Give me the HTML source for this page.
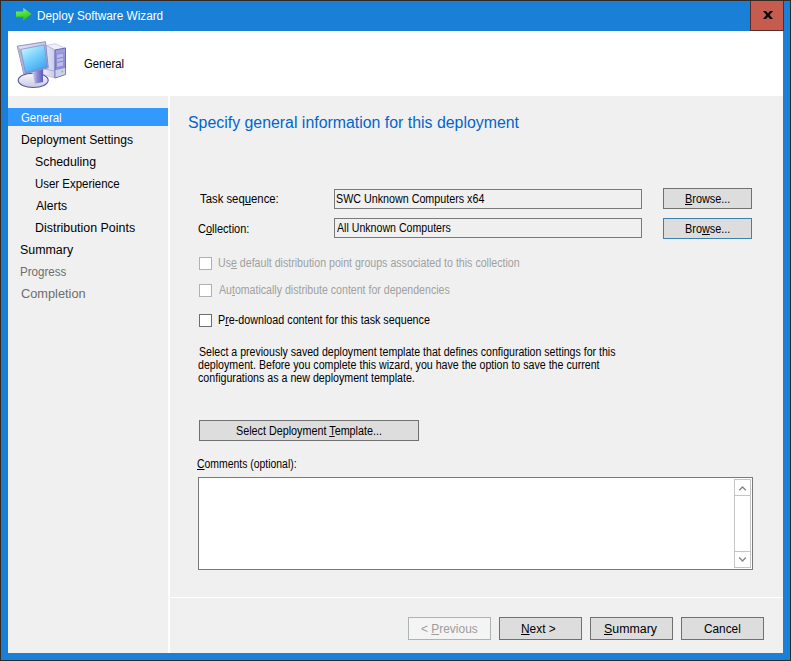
<!DOCTYPE html>
<html><head><meta charset="utf-8">
<style>
*{margin:0;padding:0;box-sizing:border-box}
html,body{width:791px;height:661px;overflow:hidden;background:#342a22}
body{position:relative;font-family:"Liberation Sans",sans-serif;color:#000}
.a{position:absolute}
.t{position:absolute;white-space:nowrap;line-height:1;transform-origin:0 0}
.u{text-decoration:underline}
.btn{position:absolute;background:#dddddd;border:1px solid #707070}
.tb{position:absolute;background:#f0f0f0;border:1px solid #7a7a7a}

.cb{position:absolute;width:13px;height:13px;background:#fff;border:1px solid #6d6d6d}
.cb.dis{border-color:#adb2b5}
</style></head><body>
<div class="a" style="left:1px;top:1px;width:789px;height:659px;background:#1a7fd6"></div>
<svg class="a" style="left:0;top:0" width="40" height="30" viewBox="0 0 40 30">
<defs>
<linearGradient id="ga" x1="0" y1="0" x2="0.3" y2="1"><stop offset="0" stop-color="#8cf27a"/><stop offset="0.5" stop-color="#55e043"/><stop offset="1" stop-color="#2fb82a"/></linearGradient>
</defs>
<path d="M16 11.5 H23.2 V7.8 L31.8 14.3 L23.2 21 V17.2 H16 Z" fill="url(#ga)"/>
<path d="M16.3 17 H23.3 M23.6 20.4 L31.2 14.6" stroke="#23a323" stroke-width="0.8" fill="none" opacity="0.8"/>
</svg>
<div class="a" style="left:750px;top:1px;width:34px;height:30px;background:#c65b50;border:1px solid #5a2c26;border-top:none"></div>
<svg class="a" style="left:759.5px;top:8px" width="16" height="14" viewBox="0 0 16 14">
<path d="M3 3 H6.2 L8 5.4 L9.8 3 H13 L9.6 7 L13 11 H9.8 L8 8.6 L6.2 11 H3 L6.4 7 Z" fill="#000"/>
</svg>

<div class="a" style="left:8px;top:31px;width:775px;height:622px;background:#f0f0f0"></div>
<div class="a" style="left:8px;top:31px;width:775px;height:65px;background:#fff"></div>
<div class="a" style="left:168px;top:96px;width:2px;height:557px;background:#fff"></div>
<div class="a" style="left:170px;top:597px;width:613px;height:1px;background:#fff"></div>

<svg class="a" style="left:0;top:31px" width="80" height="65" viewBox="0 31 80 65">
<defs>
<linearGradient id="scr" x1="0.2" y1="0" x2="0.8" y2="1"><stop offset="0" stop-color="#c8f6ff"/><stop offset="0.45" stop-color="#78d0fc"/><stop offset="1" stop-color="#36a0f2"/></linearGradient>
<linearGradient id="frm" x1="0" y1="0" x2="1" y2="1"><stop offset="0" stop-color="#e8e8f4"/><stop offset="1" stop-color="#a4a4d4"/></linearGradient>
<linearGradient id="base" x1="0" y1="0" x2="0" y2="1"><stop offset="0" stop-color="#fafafe"/><stop offset="1" stop-color="#c8c8e0"/></linearGradient>
<linearGradient id="tw" x1="0" y1="0" x2="1" y2="0"><stop offset="0" stop-color="#eeeef8"/><stop offset="1" stop-color="#cacae8"/></linearGradient>
<linearGradient id="tf" x1="0" y1="0" x2="0" y2="1"><stop offset="0" stop-color="#a0a0e2"/><stop offset="1" stop-color="#8484cc"/></linearGradient>
<linearGradient id="neck" x1="0" y1="0" x2="1" y2="0"><stop offset="0" stop-color="#dcdcf4"/><stop offset="0.45" stop-color="#9090d6"/><stop offset="1" stop-color="#5a5abc"/></linearGradient>
</defs>
<!-- tower -->
<path d="M46.3 45.5 L55 43.8 L65.5 48 L55 50 Z" fill="#f0f0f8" stroke="#b4b4d8" stroke-width="0.6"/>
<path d="M46.3 45.5 L55 50 L55 78 L43 74.5 L43 68 L46.3 67 Z" fill="url(#tw)" stroke="#a8a8d0" stroke-width="0.6"/>
<path d="M55 50 L65.5 48 L65.5 74.5 L55 78 Z" fill="url(#tf)" stroke="#5c5cb2" stroke-width="0.9"/>
<path d="M56.6 54.5 L63.6 53 L63.6 66 L56.6 67.5 Z" fill="#bcbcea" stroke="#7474c4" stroke-width="0.5"/>
<path d="M57.2 58.6 L63 57.3 M57.2 62.4 L63 61.1" stroke="#7a7ac6" stroke-width="0.9"/>
<path d="M55.4 70.2 L65.2 68 L65.2 74.3 L55.4 77.6 Z" fill="#cfcfec"/>
<path d="M43 68.6 L55 71.2" stroke="#9a9acc" stroke-width="0.7" fill="none"/>
<circle cx="62.3" cy="71.6" r="1" fill="#5fe05f"/>
<!-- base -->
<ellipse cx="33.2" cy="80.3" rx="15" ry="7.2" fill="url(#base)" stroke="#5656a6" stroke-width="1.1"/>
<!-- neck -->
<path d="M32 71 L43 69 L43 82 L35 83.8 Z" fill="url(#neck)"/>
<!-- monitor frame -->
<path d="M17.3 46.2 L45.5 41.7 L48.3 67.8 L23.8 74 Z" fill="url(#frm)" stroke="#8484c0" stroke-width="0.9"/>
<path d="M17.6 46.6 L20.9 49.4 L25.4 72.7 L23.9 73.6 Z" fill="#b4b4d0"/>
<path d="M20.9 49.4 L44.2 44.9 L47.1 67 L25.4 72.7 Z" fill="url(#scr)" stroke="#6a7ac8" stroke-width="0.6"/>
</svg>


<div class="a" style="left:8px;top:108px;width:160px;height:18px;background:#3399ff"></div>

<div class="tb" style="left:334px;top:189px;width:308px;height:20px"></div>
<div class="btn" style="left:663px;top:188px;width:89px;height:21px"></div>
<div class="tb" style="left:334px;top:218px;width:308px;height:20px"></div>
<div class="btn" style="left:663px;top:218px;width:89px;height:21px;border-color:#3c7fb1"></div>

<div class="cb dis" style="left:199px;top:257px"></div>
<div class="cb dis" style="left:199px;top:284px"></div>
<div class="cb" style="left:199px;top:314px"></div>

<div class="btn" style="left:199px;top:420px;width:220px;height:21px"></div>

<div class="a" style="left:198px;top:477px;width:555px;height:93px;background:#fff;border:1px solid #7a7a7a"></div>
<div class="a" style="left:734px;top:479px;width:17px;height:89px;background:#fff;border:1px solid #c4c4c4"></div>
<div class="a" style="left:734px;top:479px;width:17px;height:17px;border:1px solid #c4c4c4"></div>
<div class="a" style="left:734px;top:551px;width:17px;height:17px;border:1px solid #c4c4c4"></div>
<svg class="a" style="left:734px;top:479px" width="17" height="89" viewBox="0 0 17 89">
<path d="M5.2 11.3 L8.5 8 L11.8 11.3" stroke="#868686" stroke-width="1.4" fill="none"/>
<path d="M5.2 78.6 L8.5 81.9 L11.8 78.6" stroke="#868686" stroke-width="1.4" fill="none"/>
</svg>


<div class="btn" style="left:408px;top:617px;width:83px;height:23px;background:#f4f4f4;border-color:#adb2b5"></div>
<div class="btn" style="left:499px;top:617px;width:83px;height:23px"></div>
<div class="btn" style="left:590px;top:617px;width:83px;height:23px"></div>
<div class="btn" style="left:681px;top:617px;width:83px;height:23px"></div>

<div class="t" style="left:37.02px;top:10px;font-size:12px;color:#fff;transform:scaleX(0.9802)">Deploy Software Wizard</div>
<div class="t" style="left:84.46px;top:58px;font-size:12px;color:#000;transform:scaleX(0.9400)">General</div>
<div class="t" style="left:21.05px;top:112px;font-size:12px;color:#fff;transform:scaleX(0.9500)">General</div>
<div class="t" style="left:20.59px;top:134px;font-size:12px;color:#000;transform:scaleX(1.0130)">Deployment Settings</div>
<div class="t" style="left:35.07px;top:156px;font-size:12px;color:#000;transform:scaleX(1.0281)">Scheduling</div>
<div class="t" style="left:35.05px;top:178px;font-size:12px;color:#000;transform:scaleX(0.9535)">User Experience</div>
<div class="t" style="left:36.00px;top:200px;font-size:12px;color:#000;transform:scaleX(1.0138)">Alerts</div>
<div class="t" style="left:35.46px;top:222px;font-size:12px;color:#000;transform:scaleX(1.0351)">Distribution Points</div>
<div class="t" style="left:20.27px;top:244px;font-size:12px;color:#000;transform:scaleX(1.0347)">Summary</div>
<div class="t" style="left:20.03px;top:266px;font-size:12px;color:#6d6d6d;transform:scaleX(0.9652)">Progress</div>
<div class="t" style="left:20.53px;top:288px;font-size:12px;color:#6d6d6d;transform:scaleX(1.0655)">Completion</div>
<div class="t" style="left:187.51px;top:115px;font-size:16px;color:#0066cc;transform:scaleX(0.9924)">Specify general information for this deployment</div>
<div class="t" style="left:199.50px;top:193px;font-size:12px;color:#000;transform:scaleX(0.9444)">Task seq<span class="u">u</span>ence:</div>
<div class="t" style="left:198.08px;top:223px;font-size:12px;color:#000;transform:scaleX(0.9170)">C<span class="u">o</span>llection:</div>
<div class="t" style="left:336.11px;top:193px;font-size:12px;color:#000;transform:scaleX(0.8933)">SWC Unknown Computers x64</div>
<div class="t" style="left:337.00px;top:222px;font-size:12px;color:#000;transform:scaleX(0.8843)">All Unknown Computers</div>
<div class="t" style="left:684.59px;top:193px;font-size:12px;color:#000;transform:scaleX(0.9064)"><span class="u">B</span>rowse...</div>
<div class="t" style="left:684.59px;top:223px;font-size:12px;color:#000;transform:scaleX(0.9064)">Bro<span class="u">w</span>se...</div>
<div class="t" style="left:217.72px;top:257px;font-size:12px;color:#a0a0a0;transform:scaleX(0.8849)">Us<span class="u">e</span> default distribution point groups associated to this collection</div>
<div class="t" style="left:218.60px;top:284px;font-size:12px;color:#a0a0a0;transform:scaleX(0.8823)">Au<span class="u">t</span>omatically distribute content for dependencies</div>
<div class="t" style="left:217.71px;top:314px;font-size:12px;color:#000;transform:scaleX(0.8949)">P<span class="u">r</span>e-download content for this task sequence</div>
<div class="t" style="left:198.62px;top:346px;font-size:12px;color:#000;transform:scaleX(0.8819)">Select a previously saved deployment template that defines configuration settings for this</div>
<div class="t" style="left:198.31px;top:359px;font-size:12px;color:#000;transform:scaleX(0.8865)">deployment. Before you complete this wizard, you have the option to save the current</div>
<div class="t" style="left:198.11px;top:372px;font-size:12px;color:#000;transform:scaleX(0.8880)">configurations as a new deployment template.</div>
<div class="t" style="left:235.60px;top:425px;font-size:12px;color:#000;transform:scaleX(0.8981)">Select Deployment <span class="u">T</span>emplate...</div>
<div class="t" style="left:197.13px;top:458px;font-size:12px;color:#000;transform:scaleX(0.8679)"><span class="u">C</span>omments (optional):</div>
<div class="t" style="left:421.01px;top:623px;font-size:12px;color:#9d9d9d;transform:scaleX(0.9945)">&lt; <span class="u">P</span>revious</div>
<div class="t" style="left:521.31px;top:623px;font-size:12px;color:#000;transform:scaleX(0.9909)"><span class="u">N</span>ext &gt;</div>
<div class="t" style="left:604.17px;top:623px;font-size:12px;color:#000;transform:scaleX(1.0327)"><span class="u">S</span>ummary</div>
<div class="t" style="left:703.91px;top:623px;font-size:12px;color:#000;transform:scaleX(0.9857)">Cancel</div>
</body></html>
